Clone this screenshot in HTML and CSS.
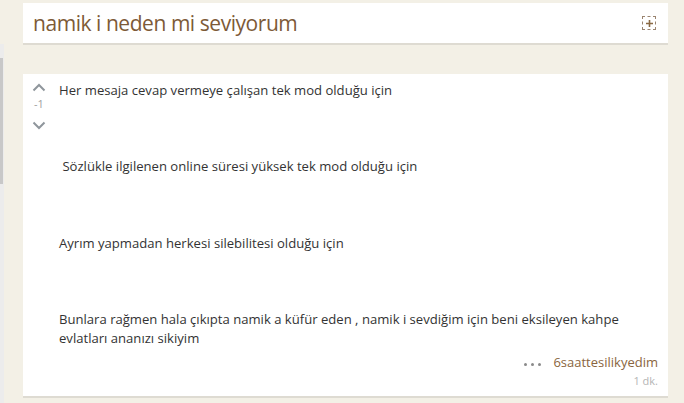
FILE: index.html
```html
<!DOCTYPE html>
<html lang="tr">
<head>
<meta charset="utf-8">
<link rel="stylesheet" href="styles.css">
</head>
<body>
<div class="page">
  <div class="strip"><div class="thumb"></div></div>
  <main class="main">
    <header class="topic">
      <h1 class="title">namik i neden mi seviyorum</h1>
      <span class="expand"><svg width="9" height="9" viewBox="0 0 9 9"><path d="M4.5 1v7M1 4.5h7" stroke="#8a6a45" stroke-width="1.6"/></svg></span>
    </header>
    <article class="entry">
      <div class="votes">
        <svg class="chev" width="14" height="9" viewBox="0 0 14 9"><path d="M1.5 7.5L7 2l5.5 5.5" fill="none" stroke="#8f969c" stroke-width="2"/></svg>
        <span class="score">-1</span>
        <svg class="chev" width="14" height="9" viewBox="0 0 14 9"><path d="M1.5 1.5L7 7l5.5-5.5" fill="none" stroke="#8f969c" stroke-width="2"/></svg>
      </div>
      <div class="body">
        <p class="content">Her mesaja cevap vermeye çalışan tek mod olduğu için<br><br><br><br>&nbsp;Sözlükle ilgilenen online süresi yüksek tek mod olduğu için<br><br><br><br>Ayrım yapmadan herkesi silebilitesi olduğu için<br><br><br><br>Bunlara rağmen hala çıkıpta namik a küfür eden , namik i sevdiğim için beni eksileyen kahpe evlatları ananızı sikiyim</p>
        <footer class="meta">
          <span class="dots"><i></i><i></i><i></i></span>
          <div class="who">
            <span class="author">6saattesilikyedim</span>
            <span class="time">1 dk.</span>
          </div>
        </footer>
      </div>
    </article>
  </main>
</div>
</body>
</html>
```
FILE: styles.css
```css
* { box-sizing: border-box; }
html, body { margin: 0; padding: 0; }
body {
  background: #f3f0e6;
  font-family: "Open Sans", "Noto Sans", sans-serif;
  color: #333;
  height: 403px;
  overflow: hidden;
}
.page { display: flex; align-items: flex-start; }
.strip {
  width: 4px;
  margin-top: 44px;
  height: 359px;
  background: #ececec;
  flex: none;
}
.thumb {
  width: 3px;
  margin-top: 14px;
  height: 126px;
  background: #c8c8c8;
}
.main {
  flex: 1;
  padding: 3px 16px 0 19px;
}
.topic {
  background: #fff;
  height: 42px;
  border-bottom: 2px solid #dedbd2;
  display: flex;
  align-items: center;
  justify-content: space-between;
  padding: 0 12px 0 10px;
}
.title {
  margin: 0;
  font-size: 21px;
  font-weight: 400;
  color: #7d5a37;
  letter-spacing: -0.45px;
  line-height: 28px;
}
.expand {
  width: 14px;
  height: 14px;
  border: 1px dashed #9a8470;
  display: flex;
  align-items: center;
  justify-content: center;
}
.entry {
  margin-top: 29px;
  background: #fff;
  border-bottom: 2px solid #dedbd2;
  display: flex;
  padding: 7px 10px 6px 9px;
  min-height: 322px;
}
.votes {
  width: 14px;
  display: flex;
  flex-direction: column;
  align-items: center;
  margin-top: 2px;
}
.chev { display: block; }
.score {
  font-size: 11px;
  color: #a0a0a0;
  line-height: 14px;
  margin: 5px 0 10px;
}
.body { flex: 1; margin-left: 13px; display: flex; flex-direction: column; }
.content {
  margin: 0;
  font-size: 13.1px;
  line-height: 19.1px;
  color: #333;
}
.meta {
  display: flex;
  justify-content: flex-end;
  align-items: flex-start;
  gap: 12px;
  margin-top: 5px;
}
.dots {
  display: flex;
  gap: 4px;
  margin-top: 10px;
}
.dots i {
  width: 3px;
  height: 3px;
  border-radius: 50%;
  background: #8a8a8a;
}
.who { display: flex; flex-direction: column; align-items: flex-end; }
.author { font-size: 13px; color: #8a6540; line-height: 18px; }
.time { font-size: 11px; color: #b5b5b5; line-height: 19px; }
```
